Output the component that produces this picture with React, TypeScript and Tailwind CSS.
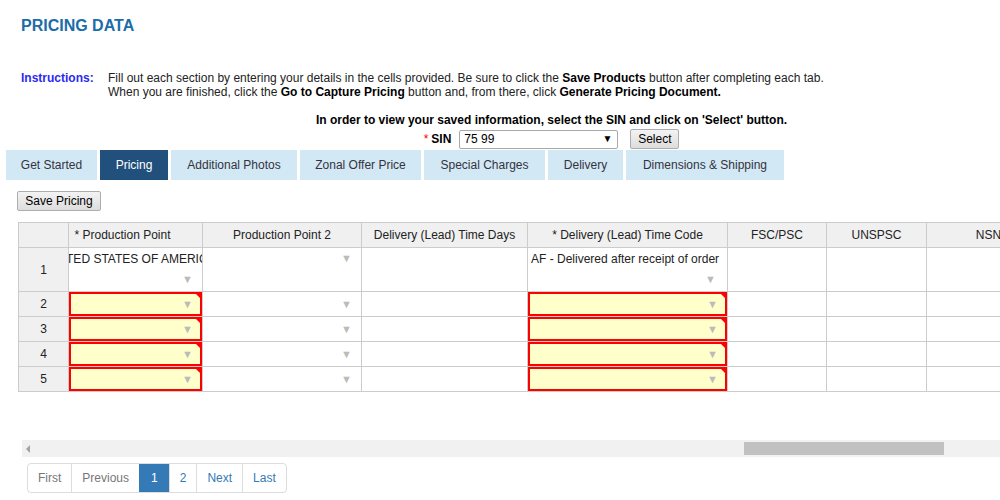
import React from "react";

const tabs = [
  { label: "Get Started", w: "w-[91px]" },
  { label: "Pricing", w: "w-[68px]", active: true },
  { label: "Additional Photos", w: "w-[126px]" },
  { label: "Zonal Offer Price", w: "w-[121px]" },
  { label: "Special Charges", w: "w-[121px]" },
  { label: "Delivery", w: "w-[75px]" },
  { label: "Dimensions & Shipping", w: "w-[158px]" },
];

const colWidths = ["w-[50px]", "w-[134px]", "w-[159px]", "w-[166px]", "w-[200px]", "w-[99px]", "w-[100px]", "w-[124px]"];

function Arrow() {
  return <span className="text-[11px] leading-none text-[#bbbbbb]">▼</span>;
}

function RequiredCell() {
  return (
    <td className="relative border border-[#cccccc] bg-[#ffffcc] p-0 shadow-[inset_0_0_0_2px_#ff0000]">
      <div className="flex h-[24px] items-center justify-end pr-[9px]">
        <Arrow />
      </div>
      <div className="absolute right-0 top-0 h-0 w-0 border-l-[8px] border-t-[8px] border-l-transparent border-t-[#ff0000]" />
    </td>
  );
}

function DropCell() {
  return (
    <td className="border border-[#cccccc] p-0">
      <div className="flex h-[24px] items-center justify-end pr-[9px]">
        <Arrow />
      </div>
    </td>
  );
}

function EmptyCell() {
  return <td className="border border-[#cccccc] p-0" />;
}

export default function App() {
  return (
    <div className="w-[1000px] h-[500px] overflow-hidden bg-white text-[12px] text-[#333333]" style={{ fontFamily: '"Liberation Sans", Arial, sans-serif' }}>
      <h1 className="px-[21px] pt-[16px] text-[16px] font-bold leading-[20px] text-[#1b6ca8]">PRICING DATA</h1>

      <div className="mt-[35px] flex px-[21px] leading-[14px]">
        <div className="w-[87px] shrink-0 font-bold text-[#2b2bee]">Instructions:</div>
        <div className="text-[#222222]">
          <p>
            Fill out each section by entering your details in the cells provided. Be sure to click the <b className="text-black">Save Products</b> button after completing each tab.
          </p>
          <p>
            When you are finished, click the <b className="text-black">Go to Capture Pricing</b> button and, from there, click <b className="text-black">Generate Pricing Document.</b>
          </p>
        </div>
      </div>

      <div className="mt-[14px] pl-[103px]">
        <p className="text-center font-bold leading-[14px] text-black">
          In order to view your saved information, select the SIN and click on 'Select' button.
        </p>
        <div className="mt-[2px] flex h-[20px] items-center justify-center">
          <span className="mr-[3px] text-[#ff0000]">*</span>
          <span className="mr-[8px] font-bold text-black">SIN</span>
          <div className="flex h-[19px] w-[159px] items-center justify-between rounded-[2px] border border-[#a9a9a9] bg-white pl-[4px] pr-[5px] text-black">
            <span>75 99</span>
            <span className="text-[10px] leading-none">▼</span>
          </div>
          <button className="ml-[12px] h-[20px] w-[49px] rounded-[2px] border border-[#adadad] bg-gradient-to-b from-[#f3f3f3] to-[#dddddd] text-[12px] text-black">
            Select
          </button>
        </div>
      </div>

      <div className="mt-[1px] flex gap-[3px] pl-[6px]">
        {tabs.map((t) => (
          <div
            key={t.label}
            className={
              t.active
                ? `${t.w} flex h-[30px] items-center justify-center bg-[#22507c] text-white`
                : `${t.w} flex h-[30px] items-center justify-center bg-[#d3e8f5] text-[#333340]`
            }
          >
            {t.label}
          </div>
        ))}
      </div>

      <button className="ml-[17px] mt-[11px] h-[20px] w-[84px] rounded-[2px] border border-[#adadad] bg-gradient-to-b from-[#f3f3f3] to-[#dddddd] text-[12px] text-black">
        Save Pricing
      </button>

      <div className="ml-[18px] mt-[11px] overflow-hidden">
        <table className="w-[1032px] table-fixed border-collapse">
          <colgroup>
            {colWidths.map((w, i) => (
              <col key={i} className={w} />
            ))}
          </colgroup>
          <thead>
            <tr className="h-[25px] bg-[#f0f0f0] text-[#222222]">
              <th className="border border-[#cccccc] font-normal" />
              <th className="border border-[#cccccc] pr-[26px] text-center font-normal">* Production Point</th>
              <th className="border border-[#cccccc] text-center font-normal">Production Point 2</th>
              <th className="border border-[#cccccc] text-center font-normal">Delivery (Lead) Time Days</th>
              <th className="border border-[#cccccc] text-center font-normal">* Delivery (Lead) Time Code</th>
              <th className="border border-[#cccccc] text-center font-normal">FSC/PSC</th>
              <th className="border border-[#cccccc] text-center font-normal">UNSPSC</th>
              <th className="border border-[#cccccc] text-center font-normal">NSN</th>
            </tr>
          </thead>
          <tbody className="text-[#222222]">
            <tr className="h-[44px]">
              <td className="border border-[#cccccc] bg-[#f0f0f0] text-center">1</td>
              <td className="border border-[#cccccc] p-0 align-top">
                <div className="flex h-[21px] items-center justify-center overflow-hidden whitespace-nowrap pr-[10px]">
                  <span className="shrink-0">UNITED STATES OF AMERICA</span>
                </div>
                <div className="flex h-[21px] items-center justify-end pr-[9px]">
                  <Arrow />
                </div>
              </td>
              <td className="border border-[#cccccc] p-0 align-top">
                <div className="flex h-[21px] items-center justify-end pr-[9px]">
                  <Arrow />
                </div>
              </td>
              <EmptyCell />
              <td className="border border-[#cccccc] p-0 align-top">
                <div className="flex h-[21px] items-center overflow-hidden whitespace-nowrap pl-[3px]">
                  AF - Delivered after receipt of order
                </div>
                <div className="flex h-[21px] items-center justify-end pr-[11px]">
                  <Arrow />
                </div>
              </td>
              <EmptyCell />
              <EmptyCell />
              <EmptyCell />
            </tr>
            {[2, 3, 4, 5].map((n) => (
              <tr key={n} className="h-[25px]">
                <td className="border border-[#cccccc] bg-[#f0f0f0] text-center">{n}</td>
                <RequiredCell />
                <DropCell />
                <EmptyCell />
                <RequiredCell />
                <EmptyCell />
                <EmptyCell />
                <EmptyCell />
              </tr>
            ))}
          </tbody>
        </table>
      </div>

      <div className="ml-[22px] mt-[48px] flex h-[17px] items-center bg-[#f1f1f1] pl-[4px]">
        <div className="h-0 w-0 border-y-[4px] border-r-[4px] border-y-transparent border-r-[#a3a3a3]" />
        <div className="ml-[714px] h-[13px] w-[200px] bg-[#c1c1c1]" />
      </div>

      <div className="ml-[27px] mt-[6px] flex h-[30px] w-fit overflow-hidden rounded-[4px] border border-[#dddddd]">
        <span className="flex items-center px-[10px] text-[#777777]">First</span>
        <span className="flex items-center border-l border-[#dddddd] px-[10px] text-[#777777]">Previous</span>
        <span className="flex items-center border-l border-[#337ab7] bg-[#337ab7] px-[11px] text-white">1</span>
        <span className="flex items-center border-l border-[#dddddd] px-[10px] text-[#337ab7]">2</span>
        <span className="flex items-center border-l border-[#dddddd] px-[10px] text-[#337ab7]">Next</span>
        <span className="flex items-center border-l border-[#dddddd] px-[10px] text-[#337ab7]">Last</span>
      </div>
    </div>
  );
}
